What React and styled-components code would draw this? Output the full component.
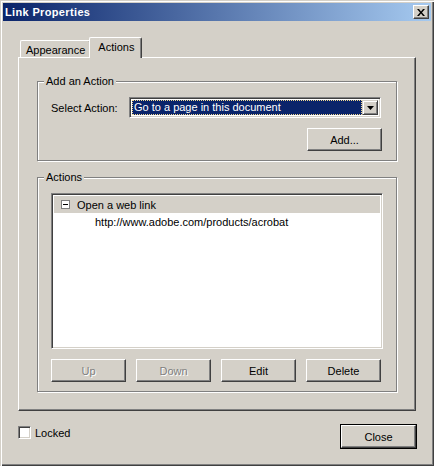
import React from 'react';
import styled, { createGlobalStyle } from 'styled-components';

const GlobalStyle = createGlobalStyle`
  html, body {
    margin: 0;
    padding: 0;
    background: #d4d0c8;
  }
  body {
    font-family: "Liberation Sans", Arial, sans-serif;
    font-size: 11px;
    color: #000;
  }
`;

const Window = styled.div`
  width: 434px;
  height: 466px;
  box-sizing: border-box;
  padding: 3px;
  background: #d4d0c8;
  box-shadow: inset 1px 1px #d4d0c8, inset 2px 2px #fff, inset -1px -1px #404040, inset -2px -2px #808080;
  display: flex;
  flex-direction: column;
`;

const TitleBar = styled.div`
  height: 18px;
  display: flex;
  align-items: center;
  justify-content: space-between;
  padding: 0 2px 0 2px;
  background: linear-gradient(to right, #0a246a, #a6caf0);
`;

const Title = styled.span`
  color: #fff;
  font-weight: bold;
  font-size: 11px;
  letter-spacing: 0.35px;
`;

const CloseBox = styled.div`
  width: 16px;
  height: 14px;
  box-sizing: border-box;
  background: #d4d0c8;
  border: 1px solid;
  border-color: #fff #404040 #404040 #fff;
  box-shadow: inset -1px -1px #808080;
  display: flex;
  align-items: center;
  justify-content: center;
`;

const Body = styled.div`
  padding: 16px 15px 0 15px;
  display: flex;
  flex-direction: column;
`;

const TabStrip = styled.div`
  position: relative;
  z-index: 1;
  display: flex;
  align-items: flex-end;
  height: 20px;
  padding-left: 2px;
`;

const Tab = styled.div`
  box-sizing: border-box;
  height: ${p => (p.$active ? '21px' : '17px')};
  margin-bottom: ${p => (p.$active ? '-1px' : '0')};
  margin-left: ${p => (p.$active ? '-2px' : '0')};
  padding: ${p => (p.$active ? '2px 7px 0 8px' : '2px 5px 0 5px')};
  background: #d4d0c8;
  border-top: 1px solid #fff;
  border-left: 1px solid #fff;
  border-right: 1px solid #404040;
  box-shadow: inset -1px 0 #808080;
  border-radius: 2px 2px 0 0;
  display: flex;
  align-items: ${p => (p.$active ? 'flex-start' : 'center')};
  line-height: 14px;
`;

const Panel = styled.div`
  box-sizing: border-box;
  height: 354px;
  border: 1px solid;
  border-color: #fff #404040 #404040 #fff;
  box-shadow: inset -1px -1px #808080;
  padding: 23px 18px 0 18px;
  display: flex;
  flex-direction: column;
  gap: 16px;
`;

const Group = styled.div`
  position: relative;
  border: 1px solid #808080;
  box-shadow: inset 1px 1px #fff, 1px 1px #fff;
  padding: ${p => p.$pad};
  display: flex;
  flex-direction: column;
`;

const Legend = styled.span`
  position: absolute;
  top: -7px;
  left: 6px;
  padding: 0 2px;
  background: #d4d0c8;
  line-height: 13px;
`;

const Row = styled.div`
  display: flex;
  align-items: center;
`;

const Label = styled.span`
  width: 78px;
`;

const Select = styled.div`
  box-sizing: border-box;
  width: 252px;
  height: 21px;
  background: #fff;
  border: 1px solid;
  border-color: #808080 #fff #fff #808080;
  box-shadow: inset 1px 1px #404040, inset -1px -1px #d4d0c8;
  padding: 2px;
  display: flex;
`;

const SelectValue = styled.div`
  flex: 1;
  background: #0a246a;
  color: #fff;
  border: 1px dotted #f0d890;
  padding-left: 1px;
  line-height: 13px;
`;

const DropButton = styled.div`
  box-sizing: border-box;
  width: 16px;
  background: #d4d0c8;
  border: 1px solid;
  border-color: #d4d0c8 #404040 #404040 #d4d0c8;
  box-shadow: inset 1px 1px #fff, inset -1px -1px #808080;
  display: flex;
  align-items: center;
  justify-content: center;
`;

const Button = styled.button`
  box-sizing: border-box;
  width: 75px;
  height: 23px;
  padding: 0;
  background: #d4d0c8;
  font-family: inherit;
  font-size: 11px;
  color: ${p => (p.disabled ? '#808080' : '#000')};
  text-shadow: ${p => (p.disabled ? '1px 1px #fff' : 'none')};
  border: 1px solid;
  border-color: #fff #404040 #404040 #fff;
  box-shadow: inset -1px -1px #808080;
  outline: ${p => (p.$default ? '1px solid #000' : 'none')};
`;

const AddRow = styled.div`
  display: flex;
  justify-content: flex-end;
  margin-top: 10px;
  margin-right: -1px;
`;

const List = styled.div`
  box-sizing: border-box;
  height: 156px;
  background: #fff;
  border: 1px solid;
  border-color: #808080 #fff #fff #808080;
  box-shadow: inset 1px 1px #404040, inset -1px -1px #d4d0c8;
  padding: 2px 2px;
`;

const ListItem = styled.div`
  height: 17px;
  display: flex;
  align-items: center;
  padding-left: ${p => p.$indent}px;
  background: ${p => (p.$selected ? '#d4d0c8' : 'transparent')};
`;

const Expander = styled.span`
  box-sizing: border-box;
  width: 9px;
  height: 9px;
  border: 1px solid #808080;
  background: #fff;
  margin-right: 7px;
  display: flex;
  align-items: center;
  justify-content: center;
  &::after {
    content: '';
    width: 5px;
    height: 1px;
    background: #000;
  }
`;

const ButtonRow = styled.div`
  display: flex;
  gap: 10px;
  margin-top: 10px;
`;

const Footer = styled.div`
  display: flex;
  justify-content: space-between;
  align-items: flex-start;
  margin-top: 14px;
`;

const CheckLabel = styled.label`
  display: flex;
  align-items: center;
  gap: 4px;
  margin-top: 1px;
`;

const CheckBox = styled.span`
  box-sizing: border-box;
  width: 13px;
  height: 13px;
  background: #fff;
  border: 1px solid;
  border-color: #808080 #fff #fff #808080;
  box-shadow: inset 1px 1px #404040, inset -1px -1px #d4d0c8;
`;

const App = () => {
  return (
    <>
      <GlobalStyle />
      <Window>
        <TitleBar>
          <Title>Link Properties</Title>
          <CloseBox>
            <svg width="8" height="7" viewBox="0 0 8 7">
              <path d="M0 0h2l2 2.5L6 0h2L5 3.5 8 7H6L4 4.5 2 7H0l3-3.5z" fill="#000" />
            </svg>
          </CloseBox>
        </TitleBar>
        <Body>
          <TabStrip>
            <Tab>Appearance</Tab>
            <Tab $active>Actions</Tab>
          </TabStrip>
          <Panel>
            <Group $pad="15px 15px 9px 13px">
              <Legend>Add an Action</Legend>
              <Row>
                <Label>Select Action:</Label>
                <Select>
                  <SelectValue>Go to a page in this document</SelectValue>
                  <DropButton>
                    <svg width="7" height="4" viewBox="0 0 7 4">
                      <path d="M0 0h7L3.5 4z" fill="#000" />
                    </svg>
                  </DropButton>
                </Select>
              </Row>
              <AddRow>
                <Button>Add...</Button>
              </AddRow>
            </Group>
            <Group $pad="15px 13px 9px 13px">
              <Legend>Actions</Legend>
              <List>
                <ListItem $selected $indent={7}>
                  <Expander />
                  Open a web link
                </ListItem>
                <ListItem $indent={41}>http://www.adobe.com/products/acrobat</ListItem>
              </List>
              <ButtonRow>
                <Button disabled>Up</Button>
                <Button disabled>Down</Button>
                <Button>Edit</Button>
                <Button>Delete</Button>
              </ButtonRow>
            </Group>
          </Panel>
          <Footer>
            <CheckLabel>
              <CheckBox />
              Locked
            </CheckLabel>
            <Button $default>Close</Button>
          </Footer>
        </Body>
      </Window>
    </>
  );
};

export default App;
